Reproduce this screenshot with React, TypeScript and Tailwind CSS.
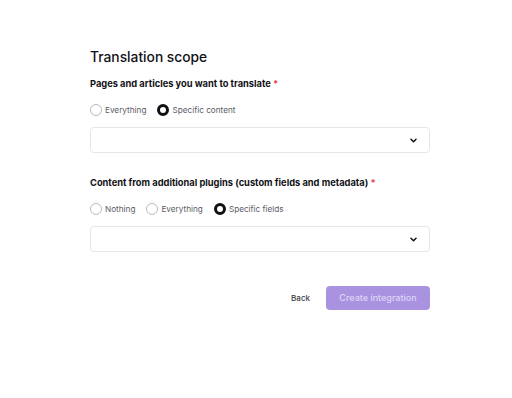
import { useState } from "react";

type Option = { id: string; label: string };

function Radio({ checked, label, onSelect }: { checked: boolean; label: string; onSelect: () => void }) {
  return (
    <label className="flex cursor-pointer items-center gap-[3px]" onClick={onSelect}>
      {checked ? (
        <span className="h-[12px] w-[12px] rounded-full border-[3.5px] border-[#111115] bg-white" />
      ) : (
        <span className="h-[12px] w-[12px] rounded-full border border-[#b9b9c0] bg-white" />
      )}
      <span className="text-[8.2px] leading-[14px] text-[#5c5c66]">{label}</span>
    </label>
  );
}

function Select() {
  return (
    <button
      type="button"
      className="flex h-[26px] w-full items-center justify-end rounded-[4px] border border-[#e6e6ea] bg-white pr-[12px]"
    >
      <svg width="7" height="5" viewBox="0 0 7 5" fill="none">
        <path d="M1 1.2L3.5 3.7L6 1.2" stroke="#111115" strokeWidth="1.5" strokeLinecap="round" strokeLinejoin="round" />
      </svg>
    </button>
  );
}

function Field({
  label,
  options,
  initial,
}: {
  label: string;
  options: Option[];
  initial: string;
}) {
  const [value, setValue] = useState(initial);
  return (
    <div>
      <p className="text-[9.3px] font-bold leading-[14px] text-[#111115]">
        {label} <span className="text-[#e5484d]">*</span>
      </p>
      <div className="mt-[12px] flex h-[14px] items-center gap-[11px]">
        {options.map((option) => (
          <Radio
            key={option.id}
            checked={value === option.id}
            label={option.label}
            onSelect={() => setValue(option.id)}
          />
        ))}
      </div>
      <div className="mt-[10px]">
        <Select />
      </div>
    </div>
  );
}

export default function App() {
  return (
    <div className="min-h-[398px] bg-white font-['Inter',sans-serif]">
      <div className="box-content w-[340px] pl-[90px] pt-[47px]">
        <h1 className="text-[13.8px] font-medium leading-[20px] text-[#111115]">Translation scope</h1>
        <div className="mt-[10px]">
          <Field
            label="Pages and articles you want to translate"
            initial="specific"
            options={[
              { id: "everything", label: "Everything" },
              { id: "specific", label: "Specific content" },
            ]}
          />
        </div>
        <div className="mt-[23px]">
          <Field
            label="Content from additional plugins (custom fields and metadata)"
            initial="fields"
            options={[
              { id: "nothing", label: "Nothing" },
              { id: "everything", label: "Everything" },
              { id: "fields", label: "Specific fields" },
            ]}
          />
        </div>
        <div className="mt-[34px] flex items-center justify-end gap-[14px]">
          <button type="button" className="px-[2px] text-[8px] font-medium text-[#3c3c44]">
            Back
          </button>
          <button
            type="button"
            disabled
            className="h-[24px] w-[104px] rounded-[4px] bg-[#a993e0] text-[9px] font-medium text-[#ddd3f7]"
          >
            Create integration
          </button>
        </div>
      </div>
    </div>
  );
}
